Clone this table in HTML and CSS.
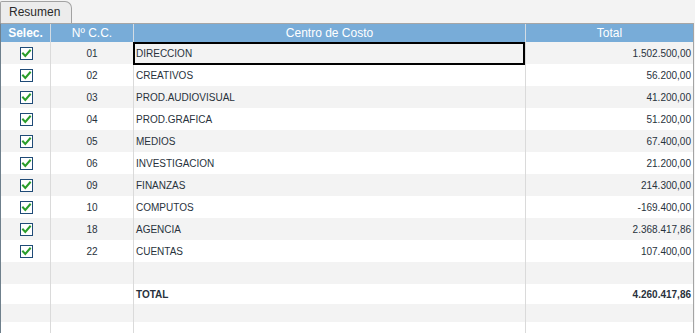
FILE: index.html
```html
<!DOCTYPE html>
<html lang="es">
<head>
<meta charset="utf-8">
<title>Resumen</title>
<link rel="stylesheet" href="styles.css">
</head>
<body>
<div class="tabs"><div class="tab">Resumen</div></div>
<div class="table">
  <div class="row head">
    <div class="c c1 bold">Selec.</div>
    <div class="c c2">Nº C.C.</div>
    <div class="c c3h">Centro de Costo</div>
    <div class="c c4h">Total</div>
  </div>
  <div class="row g">
    <div class="c c1"><span class="cb"><svg viewBox="0 0 11 11" width="11" height="11"><path d="M2 5.5 L4.3 8 L9 2.5" /></svg></span></div>
    <div class="c c2">01</div>
    <div class="c c3 sel">DIRECCION</div>
    <div class="c c4">1.502.500,00</div>
  </div>
  <div class="row">
    <div class="c c1"><span class="cb"><svg viewBox="0 0 11 11" width="11" height="11"><path d="M2 5.5 L4.3 8 L9 2.5" /></svg></span></div>
    <div class="c c2">02</div>
    <div class="c c3">CREATIVOS</div>
    <div class="c c4">56.200,00</div>
  </div>
  <div class="row g">
    <div class="c c1"><span class="cb"><svg viewBox="0 0 11 11" width="11" height="11"><path d="M2 5.5 L4.3 8 L9 2.5" /></svg></span></div>
    <div class="c c2">03</div>
    <div class="c c3">PROD.AUDIOVISUAL</div>
    <div class="c c4">41.200,00</div>
  </div>
  <div class="row">
    <div class="c c1"><span class="cb"><svg viewBox="0 0 11 11" width="11" height="11"><path d="M2 5.5 L4.3 8 L9 2.5" /></svg></span></div>
    <div class="c c2">04</div>
    <div class="c c3">PROD.GRAFICA</div>
    <div class="c c4">51.200,00</div>
  </div>
  <div class="row g">
    <div class="c c1"><span class="cb"><svg viewBox="0 0 11 11" width="11" height="11"><path d="M2 5.5 L4.3 8 L9 2.5" /></svg></span></div>
    <div class="c c2">05</div>
    <div class="c c3">MEDIOS</div>
    <div class="c c4">67.400,00</div>
  </div>
  <div class="row">
    <div class="c c1"><span class="cb"><svg viewBox="0 0 11 11" width="11" height="11"><path d="M2 5.5 L4.3 8 L9 2.5" /></svg></span></div>
    <div class="c c2">06</div>
    <div class="c c3">INVESTIGACION</div>
    <div class="c c4">21.200,00</div>
  </div>
  <div class="row g">
    <div class="c c1"><span class="cb"><svg viewBox="0 0 11 11" width="11" height="11"><path d="M2 5.5 L4.3 8 L9 2.5" /></svg></span></div>
    <div class="c c2">09</div>
    <div class="c c3">FINANZAS</div>
    <div class="c c4">214.300,00</div>
  </div>
  <div class="row">
    <div class="c c1"><span class="cb"><svg viewBox="0 0 11 11" width="11" height="11"><path d="M2 5.5 L4.3 8 L9 2.5" /></svg></span></div>
    <div class="c c2">10</div>
    <div class="c c3">COMPUTOS</div>
    <div class="c c4">-169.400,00</div>
  </div>
  <div class="row g">
    <div class="c c1"><span class="cb"><svg viewBox="0 0 11 11" width="11" height="11"><path d="M2 5.5 L4.3 8 L9 2.5" /></svg></span></div>
    <div class="c c2">18</div>
    <div class="c c3">AGENCIA</div>
    <div class="c c4">2.368.417,86</div>
  </div>
  <div class="row">
    <div class="c c1"><span class="cb"><svg viewBox="0 0 11 11" width="11" height="11"><path d="M2 5.5 L4.3 8 L9 2.5" /></svg></span></div>
    <div class="c c2">22</div>
    <div class="c c3">CUENTAS</div>
    <div class="c c4">107.400,00</div>
  </div>
  <div class="row g">
    <div class="c c1"></div>
    <div class="c c2"></div>
    <div class="c c3"></div>
    <div class="c c4"></div>
  </div>
  <div class="row r20">
    <div class="c c1"></div>
    <div class="c c2"></div>
    <div class="c c3 bold">TOTAL</div>
    <div class="c c4 bold">4.260.417,86</div>
  </div>
  <div class="row g r18">
    <div class="c c1"></div>
    <div class="c c2"></div>
    <div class="c c3"></div>
    <div class="c c4"></div>
  </div>
  <div class="row r20">
    <div class="c c1"></div>
    <div class="c c2"></div>
    <div class="c c3"></div>
    <div class="c c4"></div>
  </div>
</div>
</body>
</html>
```
FILE: styles.css
```css
html, body {
  margin: 0;
  padding: 0;
}
body {
  width: 695px;
  height: 333px;
  overflow: hidden;
  background: #f3f3f3;
  font-family: "Liberation Sans", Arial, sans-serif;
  color: #28323c;
}
.tabs {
  height: 23px;
  display: flex;
  align-items: flex-end;
}
.tab {
  box-sizing: border-box;
  width: 72px;
  height: 22px;
  border: 1px solid #a2a2a2;
  border-bottom: none;
  border-radius: 2px 7px 0 0;
  background: #ececec;
  font-size: 12px;
  color: #2a2a2a;
  padding-left: 8px;
  line-height: 21px;
}
.table {
  box-sizing: border-box;
  width: 694px;
  height: 310px;
  border-top: 1px solid #a6a6a6;
  border-left: 1px solid #6f808c;
  border-right: 1px solid #a4a4a4;
  background: #ffffff;
}
.row {
  display: grid;
  grid-template-columns: 50px 83px 392px 167px;
  height: 22px;
  font-size: 10px;
}
.row.g {
  background: #f3f3f3;
}
.row.r20 { height: 20px; }
.row.r18 { height: 18px; }
.row.head {
  height: 18px;
  background: #78acd8;
  color: #ffffff;
  font-size: 12px;
}
.c {
  box-sizing: border-box;
  display: flex;
  align-items: center;
  border-right: 1px solid #dadada;
  white-space: nowrap;
  overflow: visible;
}
.head .c {
  border-right-color: #d3dce4;
}
.c1, .c2, .c3h, .c4h {
  justify-content: center;
}
.c3 {
  padding-left: 2px;
}
.c4, .c4h {
  border-right: none;
}
.c4 {
  justify-content: flex-end;
  padding-right: 2px;
}
.bold {
  font-weight: bold;
}
.sel {
  position: relative;
}
.sel::after {
  content: "";
  position: absolute;
  left: -1px;
  top: 0;
  right: 0;
  bottom: -1px;
  border: 2px solid #000000;
}
.cb {
  box-sizing: border-box;
  width: 13px;
  height: 13px;
  border: 1px solid #1f4b77;
  background: #ffffff;
  display: flex;
  margin-left: 1px;
}
.cb svg {
  display: block;
}
.cb path {
  fill: none;
  stroke: #2a9e2a;
  stroke-width: 2;
  stroke-linecap: square;
  stroke-linejoin: miter;
}
```
